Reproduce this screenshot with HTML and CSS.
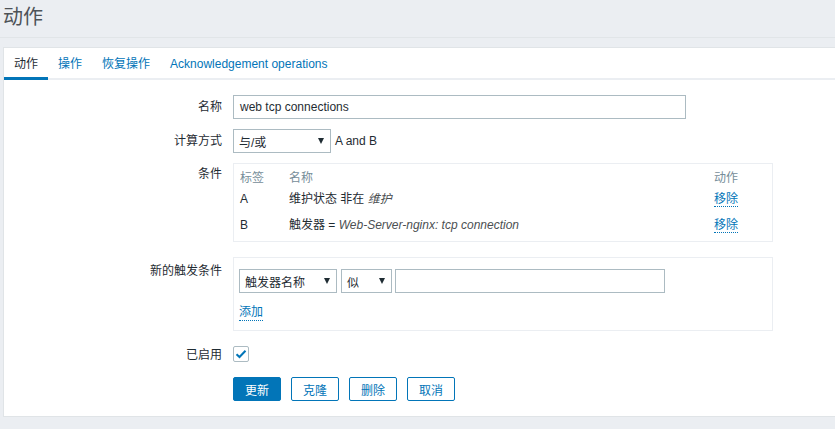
FILE: index.html
```html
<!DOCTYPE html>
<html lang="zh">
<head>
<meta charset="utf-8">
<title>动作</title>
<link rel="stylesheet" href="styles.css">
</head>
<body>
<header class="page-header"><h1 class="title">动作</h1></header>
<main class="panel">
  <nav class="tabs">
    <span class="tab active">动作</span>
    <a class="tab">操作</a>
    <a class="tab">恢复操作</a>
    <a class="tab">Acknowledgement operations</a>
  </nav>
  <div class="form">
    <div class="row r-name">
      <label class="lbl">名称</label>
      <div class="field"><div class="input wide">web tcp connections</div></div>
    </div>
    <div class="row r-calc">
      <label class="lbl">计算方式</label>
      <div class="field inline">
        <div class="select s-calc"><span>与/或</span><i class="arrow"></i></div>
        <span class="expr">A and B</span>
      </div>
    </div>
    <div class="row r-cond">
      <label class="lbl">条件</label>
      <div class="field">
        <div class="box cond">
          <div class="trow head"><span>标签</span><span>名称</span><span>动作</span></div>
          <div class="trow r1"><span>A</span><span>维护状态 非在 <em>维护</em></span><span><a class="link">移除</a></span></div>
          <div class="trow r2"><span>B</span><span>触发器 = <em>Web-Server-nginx: tcp connection</em></span><span><a class="link">移除</a></span></div>
        </div>
      </div>
    </div>
    <div class="row r-new">
      <label class="lbl">新的触发条件</label>
      <div class="field">
        <div class="box newcond">
          <div class="inline">
            <div class="select s-type"><span>触发器名称</span><i class="arrow"></i></div>
            <div class="select s-op"><span>似</span><i class="arrow"></i></div>
            <div class="input val"></div>
          </div>
          <a class="link add">添加</a>
        </div>
      </div>
    </div>
    <div class="row r-enabled">
      <label class="lbl">已启用</label>
      <div class="field">
        <span class="checkbox"><svg width="12" height="10" viewBox="0 0 12 10"><path d="M1.5 5.2 L4.5 8 L10.5 1.8" fill="none" stroke="#0275b8" stroke-width="2"/></svg></span>
      </div>
    </div>
    <div class="row r-buttons">
      <span class="lbl"></span>
      <div class="field buttons">
        <button class="btn primary">更新</button>
        <button class="btn">克隆</button>
        <button class="btn">删除</button>
        <button class="btn">取消</button>
      </div>
    </div>
  </div>
</main>
</body>
</html>
```
FILE: styles.css
```css
* { box-sizing: border-box; }
html, body { margin: 0; padding: 0; }
body {
  background: #ebeef2;
  font-family: "Liberation Sans", Arial, "Noto Sans CJK SC", sans-serif;
  font-size: 12px;
  color: #1f2c33;
  width: 835px;
  height: 429px;
  overflow: hidden;
}
.page-header {
  height: 38px;
  border-bottom: 1px solid #e1e5e8;
  padding: 4px 0 0 3px;
}
.title {
  margin: 0;
  font-weight: normal;
  font-size: 20px;
  line-height: 26px;
  color: #4d5257;
}
.panel {
  margin: 9px 0 0 3px;
  background: #fff;
  border: 1px solid #e0e4e7;
  border-right: none;
  height: 370px;
}
.tabs {
  display: flex;
  align-items: flex-start;
  height: 32px;
  border-bottom: 2px solid #ebeef2;
}
.tab {
  padding: 0 10px;
  line-height: 32px;
  height: 32px;
  color: #0275b8;
  cursor: pointer;
}
.tab.active {
  color: #1f2c33;
  border-bottom: 3px solid #0275b8;
}
.form { padding-top: 15px; }
.row {
  display: grid;
  grid-template-columns: 218px 1fr;
  column-gap: 11px;
  align-items: start;
}
.lbl {
  text-align: right;
  line-height: 24px;
}
.field { min-width: 0; }
.inline { display: flex; align-items: center; }
.input {
  height: 24px;
  border: 1px solid #acbbc2;
  padding: 0 6px;
  line-height: 22px;
  background: #fff;
}
.input.wide { width: 453px; }
.r-calc { margin-top: 10px; }
.select {
  height: 24px;
  border: 1px solid #acbbc2;
  display: flex;
  align-items: center;
  justify-content: space-between;
  padding: 0 6px 0 5px;
  background: #fff;
}
.arrow {
  width: 0; height: 0;
  border-left: 3px solid transparent;
  border-right: 3px solid transparent;
  border-top: 6px solid #1f2c33;
}
.s-calc { width: 98px; }
.expr { margin-left: 4px; }
.r-cond { margin-top: 10px; }
.r-cond .lbl { line-height: 22px; }
.box {
  width: 540px;
  border: 1px solid #ebeef2;
  background: #fff;
}
.cond { padding: 3px 6px 4px 6px; }
.trow {
  display: grid;
  grid-template-columns: 49px 1fr 52px;
}
.trow.head { height: 20px; line-height: 22px; color: #768d99; }
.trow.r1 { height: 24px; line-height: 24px; }
.trow.r2 { height: 26px; line-height: 28px; }
em { font-style: italic; color: #4b4f52; }
.link {
  color: #0275b8;
  text-decoration: none;
  border-bottom: 1px dotted #0275b8;
  cursor: pointer;
}
.r-new { margin-top: 15px; }
.r-new .lbl { line-height: 28px; }
.newcond { height: 74px; padding: 11px 5px 0 5px; }
.s-type { width: 98px; }
.s-op { width: 51px; margin-left: 4px; }
.input.val { width: 270px; margin-left: 3px; }
.add { display: inline-block; margin-top: 12px; line-height: 15px; }
.r-enabled { margin-top: 15px; }
.r-enabled .lbl { line-height: 18px; }
.checkbox {
  display: flex;
  align-items: center;
  justify-content: center;
  width: 16px; height: 16px;
  border: 1px solid #acbbc2;
  border-radius: 2px;
}
.r-buttons { margin-top: 13px; }
.buttons { display: flex; gap: 10px; }
.btn {
  width: 48px;
  height: 24px;
  border: 1px solid #0275b8;
  border-radius: 2px;
  background: #fff;
  color: #0275b8;
  font-family: inherit;
  font-size: 12px;
  padding: 0;
}
.btn.primary { background: #0275b8; color: #fff; }
```
